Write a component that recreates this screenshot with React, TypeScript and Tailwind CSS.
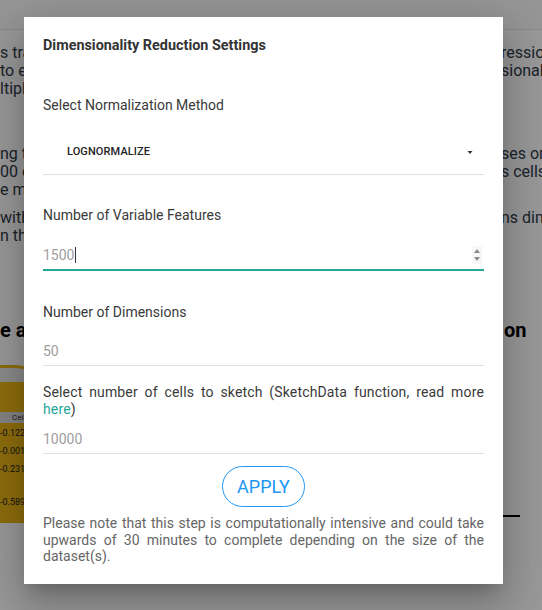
import React from 'react';

const font = { fontFamily: 'Roboto, "Noto Sans", sans-serif' };

const bgLines: { left: string; right: string; top: string }[] = [
  { left: 's tra', right: 'ression values', top: 'mt-[14px]' },
  { left: 'to e', right: 'sional plots', top: '' },
  { left: 'ltiple', right: '', top: '' },
  { left: 'ng th', right: 'ses or', top: 'mt-[47px]' },
  { left: '00 o', right: 's cells', top: '' },
  { left: 'e me', right: '', top: '' },
  { left: 'with', right: 'ns dim', top: 'mt-[10px]' },
  { left: 'n the', right: '', top: '' },
];

const cellValues = ['-0.122', '-0.001', '-0.231', '-0.589'];

const BackgroundPage: React.FC = () => {
  return (
    <div className="flex h-full flex-col bg-white" style={font}>
      <div className="h-[30px] shrink-0 border-b border-gray-200 bg-[#fbfbfb]" />
      {bgLines.map((line, i) => (
        <div key={i} className={`flex h-[18px] text-[16px] leading-[18px] text-[#2f3a4a] ${line.top}`}>
          <div className="w-[30px] overflow-hidden whitespace-nowrap">{line.left}</div>
          <div className="ml-auto w-[41px] overflow-hidden whitespace-nowrap">{line.right}</div>
        </div>
      ))}
      <div className="mt-[73px] flex h-[24px] text-[20px] font-bold leading-[24px] text-black">
        <div className="w-[30px] overflow-hidden whitespace-nowrap">e ar</div>
        <div className="ml-auto w-[39px] overflow-hidden whitespace-nowrap pl-[1px]">on</div>
      </div>
      <div className="mt-[23px] flex">
        <div className="flex h-[158px] w-[40px] flex-col overflow-hidden rounded-tr-[24px] border-t-[3px] border-[#efb716] bg-[#efb716]">
          <div className="h-[14px] bg-[#e9e9e9]" />
          <div className="mt-[30px] h-[11px] bg-[#dcdcdc] pl-[12px] text-[8px] leading-[11px] text-[#333]">
            Cell<sub className="text-[5px]">j</sub>
          </div>
          {cellValues.map((v, i) => (
            <div
              key={v}
              className={`text-[9px] leading-[12px] text-[#222] ${i === 0 ? 'mt-[4px]' : i === 3 ? 'mt-[21px]' : 'mt-[6px]'}`}
            >
              {v}
            </div>
          ))}
        </div>
        <div className="ml-auto mr-[22px] mt-[150px] h-[2px] w-[18px] bg-black" />
      </div>
    </div>
  );
};

const SpinIcon: React.FC = () => (
  <svg width="10" height="18" viewBox="0 0 10 18" className="bg-[#f7f7f7]">
    <path d="M2 7 L5 3 L8 7 Z" fill="#8a8a8a" />
    <path d="M2 11 L5 15 L8 11 Z" fill="#8a8a8a" />
  </svg>
);

const SettingsModal: React.FC = () => {
  return (
    <div
      className="absolute left-[24px] top-[17px] flex h-[567px] w-[479px] flex-col bg-white px-[19px] shadow-[0_24px_38px_3px_rgba(0,0,0,0.14),0_9px_46px_8px_rgba(0,0,0,0.12),0_11px_15px_-7px_rgba(0,0,0,0.2)]"
      style={font}
    >
      <h4 className="pt-[21px] text-[14.4px] font-bold leading-[16px] text-[#333]">
        Dimensionality Reduction Settings
      </h4>

      <label className="mt-[41px] text-[14px] leading-[20px] text-[#3a3a3a]">Select Normalization Method</label>
      <div className="mt-[27px] flex h-[33px] items-start border-b border-[#e0e0e0] pl-[24px] pr-[10px]">
        <span className="text-[11px] font-medium uppercase leading-[20px] tracking-[0.1px] text-[#222]">
          LogNormalize
        </span>
        <svg width="8" height="20" viewBox="0 0 8 20" className="ml-auto">
          <path d="M1.5 9 L6.5 9 L4 12 Z" fill="#333" />
        </svg>
      </div>

      <label className="mt-[30px] text-[14px] leading-[20px] text-[#3a3a3a]">Number of Variable Features</label>
      <div className="mt-[20px] flex items-start border-b-2 border-[#26a69a] pb-[4px]">
        <div className="flex h-[20px] items-center text-[14px] leading-[20px] text-[#9e9e9e]">
          1500
          <span className="ml-[1px] h-[16px] w-[1px] bg-[#333]" />
        </div>
        <div className="ml-auto mr-[2px] mt-[1px]">
          <SpinIcon />
        </div>
      </div>

      <label className="mt-[31px] text-[14px] leading-[20px] text-[#3a3a3a]">Number of Dimensions</label>
      <div className="mt-[19px] border-b border-[#e0e0e0] pb-[4px] text-[14px] leading-[20px] text-[#9e9e9e]">50</div>

      <p className="mt-[18px] text-justify text-[14px] leading-[17px] tracking-[0.15px] text-[#3a3a3a]">
        Select number of cells to sketch (SketchData function, read more{' '}
        <a href="#" className="text-[#26a69a]">
          here
        </a>
        )
      </p>
      <div className="mt-[11px] border-b border-[#e0e0e0] pb-[4px] text-[14px] leading-[20px] text-[#9e9e9e]">10000</div>

      <div className="mt-[12px] flex justify-center">
        <button className="h-[41px] w-[83px] rounded-full border border-[#2196f3] text-[18px] leading-[20px] text-[#2196f3]">
          APPLY
        </button>
      </div>

      <p className="mt-[8px] text-justify text-[14px] leading-[16.5px] text-[#666]">
        Please note that this step is computationally intensive and could take upwards of 30 minutes to complete
        depending on the size of the dataset(s).
      </p>
    </div>
  );
};

export default function App() {
  return (
    <div className="relative h-[610px] w-full overflow-hidden">
      <BackgroundPage />
      <div className="absolute inset-0 bg-black/40" />
      <SettingsModal />
    </div>
  );
}
